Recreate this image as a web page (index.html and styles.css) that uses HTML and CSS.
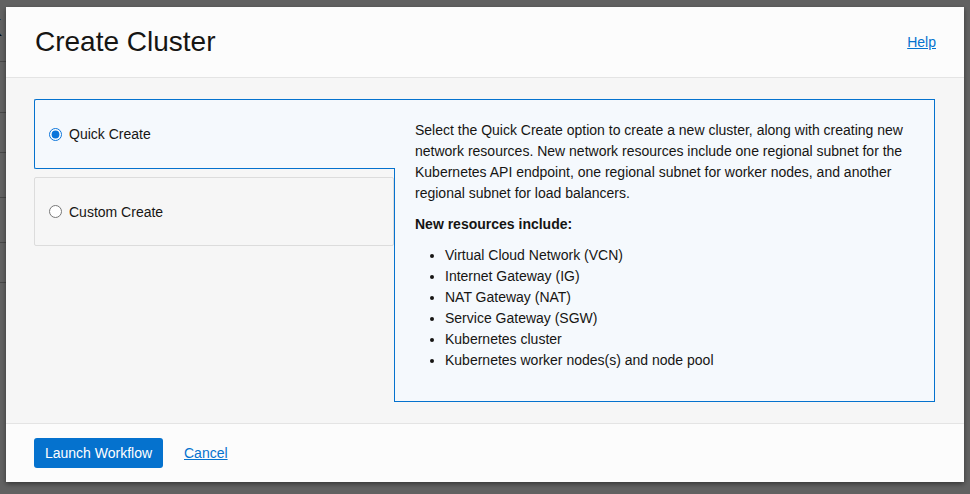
FILE: index.html
```html
<!DOCTYPE html>
<html lang="en">
<head>
<meta charset="utf-8">
<title>Create Cluster</title>
<link rel="stylesheet" href="styles.css">
</head>
<body>
<div class="page">
  <div class="page-title">K</div>
  <div class="row r1"></div>
  <div class="row r2"></div>
  <div class="row r3"></div>
  <div class="row r4"></div>
  <div class="row r5"></div>
  <div class="row r6"></div>
</div>
<div class="scrim"></div>
<div class="dialog" role="dialog" aria-labelledby="dlg-title">
  <header class="dialog-header">
    <h1 id="dlg-title" class="dialog-title">Create Cluster</h1>
    <a class="link" href="#">Help</a>
  </header>
  <div class="dialog-body">
    <div class="options">
      <label class="tile tile-selected">
        <input type="radio" name="mode" class="radio" checked>
        <span>Quick Create</span>
      </label>
      <label class="tile">
        <input type="radio" name="mode" class="radio">
        <span>Custom Create</span>
      </label>
    </div>
    <div class="panel">
      <p class="panel-text">Select the Quick Create option to create a new cluster, along with creating new network resources. New network resources include one regional subnet for the Kubernetes API endpoint, one regional subnet for worker nodes, and another regional subnet for load balancers.</p>
      <p class="panel-heading">New resources include:</p>
      <ul class="panel-list">
        <li>Virtual Cloud Network (VCN)</li>
        <li>Internet Gateway (IG)</li>
        <li>NAT Gateway (NAT)</li>
        <li>Service Gateway (SGW)</li>
        <li>Kubernetes cluster</li>
        <li>Kubernetes worker nodes(s) and node pool</li>
      </ul>
    </div>
  </div>
  <footer class="dialog-footer">
    <button class="btn-primary" type="button">Launch Workflow</button>
    <a class="link" href="#">Cancel</a>
  </footer>
</div>
</body>
</html>
```

FILE: styles.css
```css
* { box-sizing: border-box; }

html, body {
  margin: 0;
  padding: 0;
  width: 970px;
  height: 494px;
  overflow: hidden;
}

body {
  font-family: "Liberation Sans", Arial, sans-serif;
  font-size: 14px;
  color: #161513;
  background: #fff;
}

/* underlying page (only a sliver is visible) */
.page {
  width: 500px;
  padding-top: 14px;
}
.page-title {
  font-size: 24px;
  height: 47px;
  padding-left: 0;
  margin-left: -14px;
  color: #000;
}
.row { border-top: 1px solid #bbb; }
.r1 { height: 51px; }
.r2 { height: 40px; }
.r3 { height: 45px; }
.r4 { height: 45px; }
.r5 { height: 40px; }
.r6 { height: 40px; }

.scrim {
  position: fixed;
  inset: 0;
  background: rgba(0, 0, 0, 0.62);
}

.dialog {
  position: fixed;
  left: 6px;
  top: 7px;
  width: 958px;
  height: 475px;
  display: flex;
  flex-direction: column;
  background: #fcfcfc;
  box-shadow: 0 2px 5px rgba(0, 0, 0, 0.45);
}

.dialog-header {
  height: 71px;
  flex: none;
  display: flex;
  align-items: center;
  justify-content: space-between;
  padding: 0 28px 0 29px;
  border-bottom: 1px solid #e4e4e4;
  background: #fcfcfc;
}

.dialog-title {
  margin: 0;
  font-size: 28px;
  font-weight: normal;
  line-height: 34px;
  color: #161513;
}

.link {
  color: #0572ce;
  text-decoration: underline;
  font-size: 14px;
}

.dialog-body {
  flex: 1;
  display: flex;
  align-items: flex-start;
  padding: 21px 29px 0 28px;
  background: #f6f6f6;
}

.options {
  width: 361px;
  flex: none;
  display: flex;
  flex-direction: column;
  gap: 8px;
  position: relative;
  z-index: 1;
  margin-right: -1px;
}

.tile {
  display: flex;
  align-items: center;
  gap: 7px;
  padding-left: 14px;
  border: 1px solid #dcdcdc;
  border-radius: 2px;
  background: #f6f6f6;
  font-size: 14px;
  color: #161513;
  height: 69px;
  width: 360px;
}

.tile-selected {
  width: 361px;
  height: 70px;
  border-color: #0572ce;
  border-right: none;
  border-radius: 2px 0 0 2px;
  background: #f5f9fd;
}

.radio {
  width: 13px;
  height: 13px;
  margin: 0;
  accent-color: #0a74da;
}

.panel {
  flex: 1;
  height: 303px;
  border: 1px solid #0572ce;
  background: #f5f9fd;
  padding: 20px 20px 0 20px;
  line-height: 21px;
  font-size: 14px;
  color: #161513;
}

.panel-text { margin: 0; }

.panel-heading {
  margin: 10px 0 0;
  font-weight: bold;
}

.panel-list {
  margin: 10px 0 0;
  padding-left: 30px;
}

.dialog-footer {
  height: 59px;
  flex: none;
  display: flex;
  align-items: center;
  gap: 21px;
  padding: 0 28px;
  border-top: 1px solid #e4e4e4;
  background: #fcfcfc;
}

.btn-primary {
  height: 30px;
  width: 129px;
  padding: 0;
  border: none;
  border-radius: 3px;
  background: #0572ce;
  color: #fff;
  font-family: "Liberation Sans", Arial, sans-serif;
  font-size: 14px;
}
```
